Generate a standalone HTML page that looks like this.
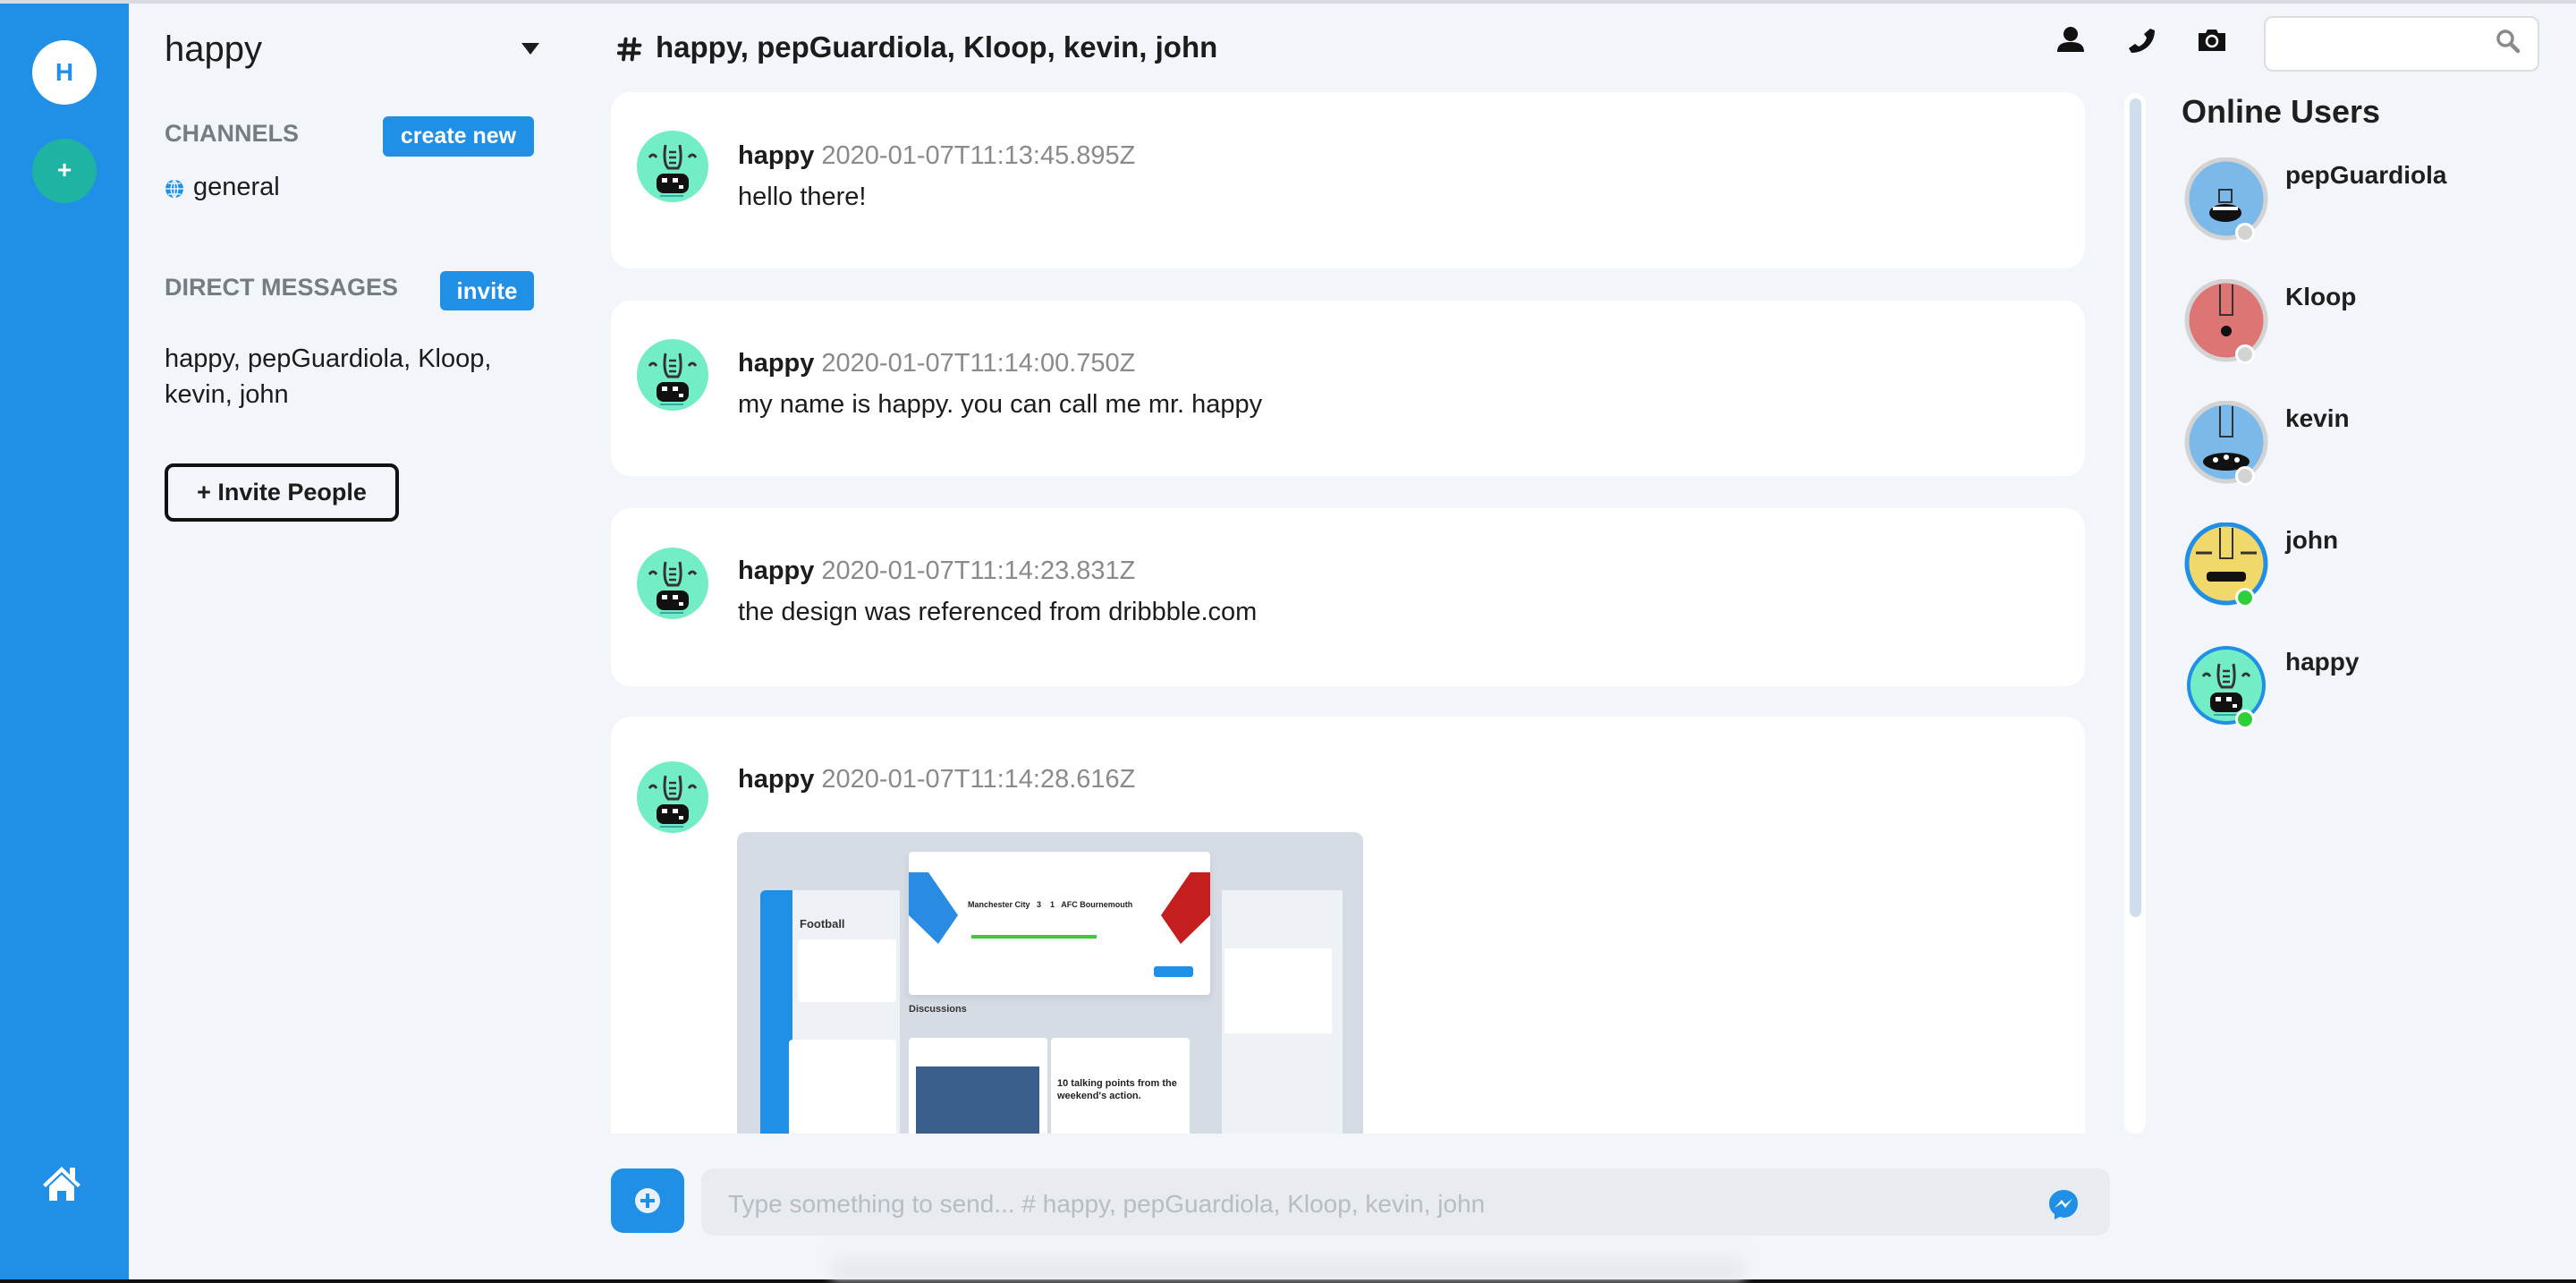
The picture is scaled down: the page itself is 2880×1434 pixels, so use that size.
<!DOCTYPE html>
<html><head><meta charset="utf-8"><style>
*{box-sizing:border-box;margin:0;padding:0}
body{width:2880px;height:1434px;overflow:hidden;background:#f2f5f9;font-family:"Liberation Sans",Arial,sans-serif;position:relative;color:#1c1c1c}
.a{position:absolute}
.blue{background:#208fe6}
.card{position:absolute;left:683px;width:1648px;background:#fff;border-radius:22px}
.name{position:absolute;left:825px;font-size:29px;font-weight:bold;color:#1c1c1c}
.name span{font-weight:normal;color:#8a8a8a;margin-left:8px}
.msg{position:absolute;left:825px;font-size:29px;color:#1c1c1c}
.uname{position:absolute;left:2555px;font-size:28px;font-weight:bold;color:#1f1f1f}
.dot{position:absolute;width:22px;height:22px;border-radius:50%;border:3px solid #fff}
</style></head><body>
<div class="a" style="left:0;top:0;width:2880px;height:4px;background:#d8dce2"></div>
<div class="a blue" style="left:0;top:4px;width:144px;height:1428px"></div>
<div class="a" style="left:0;top:1430px;width:2880px;height:4px;background:#111"></div>
<div class="a" style="left:36px;top:45px;width:72px;height:72px;border-radius:50%;background:#fff;color:#208fe6;font-size:28px;text-align:center;line-height:72px;font-weight:bold">H</div>
<div class="a" style="left:36px;top:155px;width:72px;height:72px;border-radius:50%;background:#1fb3a3;color:#fff;font-size:28px;text-align:center;line-height:70px;font-weight:bold">+</div>
<svg class="a" style="left:46px;top:1302px" width="46" height="42" viewBox="0 0 46 42"><path d="M2 22 L23 2 L32 11 V3 H38 V17 L44 22 L41 25 L23 8 L5 25Z M9 24 L23 11 L37 24 V40 H28 V29 H18 V40 H9Z" fill="#fff"/></svg>

<div class="a" style="left:184px;top:33px;font-size:40px;color:#1c1c1c">happy</div>
<div class="a" style="left:583px;top:48px;width:0;height:0;border-left:10px solid transparent;border-right:10px solid transparent;border-top:13px solid #1c1c1c"></div>
<div class="a" style="left:184px;top:134px;font-size:27px;font-weight:bold;color:#777c84">CHANNELS</div>
<div class="a blue" style="left:428px;top:130px;width:169px;height:45px;border-radius:6px;color:#fff;font-size:25px;text-align:center;line-height:45px;font-weight:bold">create new</div>
<svg class="a" style="left:184px;top:200px" width="22" height="22" viewBox="0 0 22 22"><circle cx="11" cy="11" r="10" fill="#208fe6"/><path d="M1 11H21M11 1V21M4 5H18M4 17H18M11 1C6 6 6 16 11 21C16 16 16 6 11 1" stroke="#fff" stroke-width="1.3" fill="none"/></svg>
<div class="a" style="left:216px;top:193px;font-size:29px">general</div>
<div class="a" style="left:184px;top:306px;font-size:27px;font-weight:bold;color:#777c84">DIRECT MESSAGES</div>
<div class="a blue" style="left:492px;top:303px;width:105px;height:44px;border-radius:6px;color:#fff;font-size:26px;text-align:center;line-height:44px;font-weight:bold">invite</div>
<div class="a" style="left:184px;top:381px;font-size:29px;line-height:40px">happy, pepGuardiola, Kloop,<br>kevin, john</div>
<div class="a" style="left:184px;top:518px;width:262px;height:65px;border:4px solid #111;border-radius:10px;font-size:27px;font-weight:bold;text-align:center;line-height:57px">+ Invite People</div>

<svg class="a" style="left:690px;top:40px" width="28" height="30" viewBox="0 0 32 32"><path d="M11 3L8 29M22 3L19 29M3 11H29M2 21H28" stroke="#1c1c1c" stroke-width="4.5" stroke-linecap="round"/></svg>
<div class="a" style="left:733px;top:34px;font-size:33px;font-weight:bold">happy, pepGuardiola, Kloop, kevin, john</div>

<svg class="a" style="left:2298px;top:30px" width="34" height="28" viewBox="0 0 34 28"><circle cx="17" cy="8" r="8" fill="#111"/><path d="M2 28C2 19 9 17 17 17S32 19 32 28Z" fill="#111"/></svg>
<svg class="a" style="left:2378px;top:30px" width="32" height="30" viewBox="0 0 32 30"><path d="M26 2L31 4C31 18 20 29 5 29L2 24L9 19L13 22C18 20 21 16 22 12L19 8Z" fill="#111"/></svg>
<svg class="a" style="left:2456px;top:31px" width="34" height="26" viewBox="0 0 34 26"><path d="M2 6H10L12 2H22L24 6H32V26H2Z" fill="#111"/><circle cx="17" cy="15" r="6" fill="none" stroke="#fff" stroke-width="2.5"/></svg>
<div class="a" style="left:2531px;top:18px;width:308px;height:62px;border:2px solid #ddd;border-radius:10px;background:#fff"></div>
<svg class="a" style="left:2790px;top:32px" width="28" height="28" viewBox="0 0 28 28"><circle cx="11" cy="11" r="8" fill="none" stroke="#8a8a8a" stroke-width="3.5"/><path d="M17 17L25 25" stroke="#8a8a8a" stroke-width="4.5" stroke-linecap="round"/></svg>

<div class="card" style="top:103px;height:197px"></div>
<div class="card" style="top:336px;height:196px"></div>
<div class="card" style="top:568px;height:199px"></div>
<div class="card" style="top:801px;height:466px;border-radius:22px 22px 0 0"></div>

<svg width="0" height="0" style="position:absolute"><defs>
<g id="hp"><circle cx="40" cy="40" r="40" fill="#73edc5"/><path d="M14 30Q18 24 22 30M58 30Q62 24 66 30" stroke="#333" stroke-width="3" fill="none"/><path d="M32 16Q29 36 35 42H46Q51 36 48 16" stroke="#333" stroke-width="3" fill="none"/><path d="M36 24H44M36 30H44M36 36H44" stroke="#333" stroke-width="2.5"/><rect x="22" y="48" width="36" height="22" rx="8" fill="#111"/><rect x="28" y="53" width="6" height="5" fill="#fff"/><rect x="40" y="53" width="6" height="5" fill="#fff"/><rect x="47" y="61" width="5" height="4" fill="#fff"/><path d="M26 73H52" stroke="#3aa" stroke-width="2"/></g>
</defs></svg>
<svg class="a" style="left:712px;top:146px" width="80" height="80"><use href="#hp"/></svg>
<svg class="a" style="left:712px;top:379px" width="80" height="80"><use href="#hp"/></svg>
<svg class="a" style="left:712px;top:612px" width="80" height="80"><use href="#hp"/></svg>
<svg class="a" style="left:712px;top:851px" width="80" height="80"><use href="#hp"/></svg>

<div class="name" style="top:158px">happy<span>2020-01-07T11:13:45.895Z</span></div>
<div class="msg" style="top:204px">hello there!</div>
<div class="name" style="top:390px">happy<span>2020-01-07T11:14:00.750Z</span></div>
<div class="msg" style="top:436px">my name is happy. you can call me mr. happy</div>
<div class="name" style="top:622px">happy<span>2020-01-07T11:14:23.831Z</span></div>
<div class="msg" style="top:668px">the design was referenced from dribbble.com</div>
<div class="name" style="top:855px">happy<span>2020-01-07T11:14:28.616Z</span></div>

<div class="a" style="left:824px;top:930px;width:700px;height:337px;background:#d6dce4;border-radius:10px 10px 0 0;overflow:hidden">
 <div class="a" style="left:26px;top:65px;width:36px;height:280px;background:#208fe6;border-radius:6px 0 0 0"></div>
 <div class="a" style="left:62px;top:65px;width:120px;height:280px;background:#eef1f5"></div>
 <div class="a" style="left:70px;top:95px;width:70px;height:20px;font-size:13px;font-weight:bold;color:#333">Football</div>
 <div class="a" style="left:68px;top:120px;width:110px;height:70px;background:#fff;border-radius:4px"></div>
 <div class="a" style="left:58px;top:232px;width:120px;height:110px;background:#fff;border-radius:4px"></div>
 <div class="a" style="left:192px;top:22px;width:337px;height:160px;background:#fff;border-radius:4px;box-shadow:0 4px 10px rgba(0,0,0,.08)"></div>
 <div class="a" style="left:192px;top:45px;width:55px;height:80px;background:#2a8be3;clip-path:polygon(0 0,40% 0,100% 60%,60% 100%,0 60%)"></div>
 <div class="a" style="left:474px;top:45px;width:55px;height:80px;background:#c41e1e;clip-path:polygon(60% 0,100% 0,100% 60%,40% 100%,0 60%)"></div>
 <div class="a" style="left:258px;top:76px;font-size:9px;font-weight:bold;color:#222">Manchester City &nbsp; 3 &nbsp;&nbsp; 1 &nbsp; AFC Bournemouth</div>
 <div class="a" style="left:262px;top:115px;width:140px;height:4px;background:#3fc83f"></div>
 <div class="a" style="left:466px;top:150px;width:44px;height:12px;background:#208fe6;border-radius:3px"></div>
 <div class="a" style="left:192px;top:192px;font-size:11px;font-weight:bold;color:#333">Discussions</div>
 <div class="a" style="left:192px;top:230px;width:155px;height:120px;background:#fff;border-radius:4px"></div>
 <div class="a" style="left:200px;top:262px;width:138px;height:85px;background:#3a5f8c"></div>
 <div class="a" style="left:351px;top:230px;width:155px;height:120px;background:#fff;border-radius:4px"></div>
 <div class="a" style="left:358px;top:274px;font-size:11px;font-weight:bold;color:#222;line-height:14px">10 talking points from the<br>weekend's action.</div>
 <div class="a" style="left:542px;top:65px;width:135px;height:280px;background:#eef1f5"></div>
 <div class="a" style="left:545px;top:130px;width:120px;height:95px;background:#fff"></div>
</div>

<div class="a" style="left:2375px;top:104px;width:24px;height:1163px;background:#fff;border-radius:12px"></div>
<div class="a" style="left:2381px;top:110px;width:13px;height:915px;background:#cfdeec;border-radius:7px"></div>

<div class="a" style="left:2439px;top:104px;font-size:36px;font-weight:bold;color:#1f1f1f">Online Users</div>
<svg class="a" style="left:2441px;top:176px" width="96" height="96"><circle cx="48" cy="46" r="44" fill="#7ab9ea" stroke="#d3d3d3" stroke-width="5"/><rect x="40" y="36" width="14" height="14" fill="none" stroke="#333" stroke-width="2"/><ellipse cx="47" cy="62" rx="18" ry="10" fill="#111"/><rect x="33" y="55" width="28" height="4" fill="#fff"/></svg>
<div class="dot" style="left:2499px;top:249px;background:#d3d3d3"></div>
<div class="uname" style="left:2555px;top:180px">pepGuardiola</div>
<svg class="a" style="left:2441px;top:312px" width="96" height="96"><circle cx="48" cy="46" r="44" fill="#de7575" stroke="#d3d3d3" stroke-width="5"/><path d="M41 6V40H55V6" fill="none" stroke="#333" stroke-width="2"/><circle cx="48" cy="58" r="6" fill="#111"/></svg>
<div class="dot" style="left:2499px;top:385px;background:#d3d3d3"></div>
<div class="uname" style="left:2555px;top:316px">Kloop</div>
<svg class="a" style="left:2441px;top:448px" width="96" height="96"><circle cx="48" cy="46" r="44" fill="#7ab9ea" stroke="#d3d3d3" stroke-width="5"/><path d="M41 6V40H55V6" fill="none" stroke="#333" stroke-width="2"/><ellipse cx="48" cy="68" rx="26" ry="10" fill="#111"/><circle cx="36" cy="66" r="3" fill="#fff"/><circle cx="48" cy="63" r="3" fill="#fff"/><circle cx="60" cy="66" r="3" fill="#fff"/></svg>
<div class="dot" style="left:2499px;top:521px;background:#d3d3d3"></div>
<div class="uname" style="left:2555px;top:452px">kevin</div>
<svg class="a" style="left:2441px;top:584px" width="96" height="96"><circle cx="48" cy="46" r="44" fill="#f0d86a" stroke="#208fe6" stroke-width="5"/><path d="M41 6V40H55V6" fill="none" stroke="#333" stroke-width="2"/><path d="M14 34H32M64 34H82" stroke="#333" stroke-width="3"/><rect x="26" y="55" width="44" height="11" rx="4" fill="#111"/></svg>
<div class="dot" style="left:2499px;top:657px;background:#2ed03a"></div>
<div class="uname" style="left:2555px;top:588px">john</div>
<svg class="a" style="left:2441px;top:720px" width="96" height="96"><circle cx="48" cy="46" r="44" fill="#208fe6"/><g transform="translate(8,6)"><use href="#hp"/></g></svg>
<div class="dot" style="left:2499px;top:793px;background:#2ed03a"></div>
<div class="uname" style="left:2555px;top:724px">happy</div>

<div class="a blue" style="left:683px;top:1306px;width:82px;height:72px;border-radius:14px"></div>
<svg class="a" style="left:709px;top:1327px" width="30" height="30" viewBox="0 0 30 30"><circle cx="15" cy="15" r="14" fill="#e8f1fb"/><path d="M15 7V23M7 15H23" stroke="#208fe6" stroke-width="4"/></svg>
<div class="a" style="left:784px;top:1306px;width:1575px;height:75px;background:#e8ebf0;border-radius:14px"></div>
<div class="a" style="left:814px;top:1330px;font-size:28px;color:#b8bcc3">Type something to send... # happy, pepGuardiola, Kloop, kevin, john</div>
<svg class="a" style="left:2289px;top:1328px" width="36" height="36" viewBox="0 0 36 36"><path d="M18 2C9 2 2 9 2 17C2 22 4 26 8 29V35L14 32C15 32 17 33 18 33C27 33 34 26 34 17S27 2 18 2Z" fill="#208fe6"/><path d="M8 22L16 13L20 18L28 12L20 22L16 17Z" fill="#fff"/></svg>
<div class="a" style="left:930px;top:1390px;width:1020px;height:40px;background:linear-gradient(#f2f5f9,#e3e6ea);filter:blur(6px)"></div>
</body></html>
